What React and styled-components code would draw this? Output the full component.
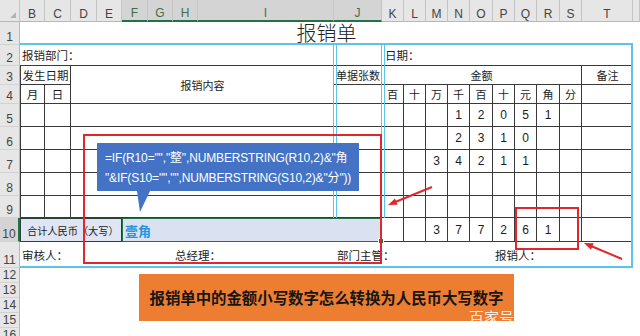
import React from 'react';
import styled, { createGlobalStyle } from 'styled-components';

const INK = '#3a3a3a';
const CYAN = '#5cc3ec';
const RED = '#e3262b';
const GREEN = '#217346';
const CJK = '"Noto Sans CJK SC", sans-serif';
const LAT = '"Liberation Sans", "Noto Sans CJK SC", sans-serif';

const COLS = [20, 25, 26, 26, 25, 26, 25, 25, 136, 48, 22, 22, 22, 22, 23, 22, 22, 23, 22, 51];
const ROWS = [22, 23, 21, 19, 19, 23, 23, 23, 23, 22, 24, 26, 15, 15, 15, 15, 15];
const LETTERS = ['B', 'C', 'D', 'E', 'F', 'G', 'H', 'I', 'J', 'K', 'L', 'M', 'N', 'O', 'P', 'Q', 'R', 'S', 'T', ''];
const UNITS = ['百', '十', '万', '千', '百', '十', '元', '角', '分'];

const Global = createGlobalStyle`
  html, body { margin: 0; padding: 0; background: #fff; overflow: hidden; }
`;

const Page = styled.div`
  position: relative;
  width: 640px;
  height: 336px;
  overflow: hidden;
  background: #fff;
`;

const Sheet = styled.div`
  display: grid;
  grid-template-columns: ${COLS.map((c) => c + 'px').join(' ')} 1fr;
  grid-template-rows: ${ROWS.map((r) => r + 'px').join(' ')};
`;

const Corner = styled.div`
  grid-row: 1;
  grid-column: 1;
  background: #e6e6e6;
  border-right: 1px solid #c4c4c4;
  border-bottom: 1px solid #b8b8b8;
  display: flex;
  align-items: flex-end;
  justify-content: flex-end;
  padding: 0 3px 3px 0;
`;

const ColHead = styled.div`
  grid-row: 1;
  grid-column: ${(p) => p.$c};
  display: flex;
  align-items: flex-end;
  justify-content: center;
  background: ${(p) => (p.$on ? '#d4d4d4' : '#e6e6e6')};
  color: ${(p) => (p.$on ? '#3f6e50' : '#444')};
  border-right: 1px solid #c4c4c4;
  border-bottom: ${(p) => (p.$on ? `2px solid ${GREEN}` : '1px solid #b8b8b8')};
  font: 12px/14px ${LAT};
`;

const RowHead = styled.div`
  grid-column: 1;
  grid-row: ${(p) => p.$r};
  display: flex;
  align-items: flex-end;
  justify-content: center;
  background: ${(p) => (p.$on ? '#d4d4d4' : '#e6e6e6')};
  color: #444;
  border-right: ${(p) => (p.$on ? `2px solid ${GREEN}` : '1px solid #b8b8b8')};
  border-bottom: 1px solid #d2d2d2;
  font: 12px/14px ${LAT};
`;

const edge = (p, s) => (p.$b && p.$b.includes(s) ? `1px solid ${INK}` : 'none');

const Cell = styled.div`
  grid-column: ${(p) => p.$c} / span ${(p) => p.$cs || 1};
  grid-row: ${(p) => p.$r} / span ${(p) => p.$rs || 1};
  display: flex;
  align-items: center;
  justify-content: ${(p) => p.$align || 'center'};
  padding-left: ${(p) => p.$pl || 0}px;
  border-top: ${(p) => edge(p, 't')};
  border-right: ${(p) => edge(p, 'r')};
  border-bottom: ${(p) => edge(p, 'b')};
  border-left: ${(p) => edge(p, 'l')};
  font-family: ${LAT};
  font-size: ${(p) => p.$fs || 12}px;
  color: #1c1c1c;
  white-space: nowrap;
  min-width: 0;
`;

const Title = styled.div`
  grid-column: 2 / span 19;
  grid-row: 2;
  display: flex;
  align-items: flex-end;
  justify-content: center;
  border-bottom: 2px solid ${CYAN};
  font-family: ${CJK};
  font-weight: 300;
  font-size: 20px;
  line-height: 21px;
  color: #222;
`;

const TotalLabel = styled.div`
  grid-column: 2 / span 4;
  grid-row: 11;
  display: flex;
  align-items: center;
  padding-left: 6px;
  background: #dfe5f2;
  border: 1px solid #2e3f36;
  font: 10.2px ${CJK};
  color: #1c1c1c;
  white-space: nowrap;
  overflow: hidden;
`;

const Selected = styled.div`
  grid-column: 6 / span 5;
  grid-row: 11;
  position: relative;
  display: flex;
  align-items: center;
  padding-left: 2px;
  background: #dae2f2;
  border: 1.5px solid ${GREEN};
  font: bold 13px ${CJK};
  color: #1f97de;
  &::after {
    content: '';
    position: absolute;
    right: -3px;
    bottom: -3px;
    width: 4px;
    height: 4px;
    background: ${GREEN};
    border: 1px solid #fff;
  }
`;

const CyanFrame = styled.div`
  grid-column: 2 / span 19;
  grid-row: 3 / span 10;
  border-right: 2px solid ${CYAN};
  border-bottom: 2px solid ${CYAN};
  pointer-events: none;
`;

const JFrame = styled.div`
  grid-column: 10;
  grid-row: 3 / span 8;
  margin: 0 -3px 0 -1.5px;
  border-left: 4px double ${CYAN};
  border-right: 4px double ${CYAN};
  pointer-events: none;
`;

const RedBox = styled.div`
  position: absolute;
  left: ${(p) => p.$x}px;
  top: ${(p) => p.$y}px;
  width: ${(p) => p.$w}px;
  height: ${(p) => p.$h}px;
  box-sizing: border-box;
  border: 2px solid ${RED};
  pointer-events: none;
`;

const Callout = styled.div`
  position: absolute;
  left: 97px;
  top: 143px;
  width: 262px;
  height: 48px;
  box-sizing: border-box;
  padding: 5px 0 0 8px;
  background: #4472c4;
  color: #fff;
  font-family: ${LAT};
  font-size: 12px;
  line-height: 20px;
  letter-spacing: -0.15px;
  &::after {
    content: '';
    position: absolute;
    left: 40px;
    top: 48px;
    width: 13px;
    height: 21px;
    background: #4472c4;
    clip-path: polygon(0 0, 100% 0, 23% 100%);
  }
`;

const FormulaLine = styled.div`
  white-space: pre;
`;

const Banner = styled.div`
  position: absolute;
  left: 139px;
  top: 274px;
  width: 375px;
  height: 47px;
  background: #ed7d31;
  display: flex;
  align-items: center;
  justify-content: center;
  padding-bottom: 1px;
  box-sizing: border-box;
  font: bold 15.4px ${CJK};
  color: #161616;
`;

const Watermark = styled.span`
  position: absolute;
  right: 0;
  bottom: -5px;
  font: 15px/18px ${CJK};
  color: rgba(255, 255, 255, 0.88);
`;

const ArrowLayer = styled.svg`
  position: absolute;
  left: 0;
  top: 0;
  pointer-events: none;
`;

const VALUES = {
  6: { 14: 1, 15: 2, 16: 0, 17: 5, 18: 1 },
  7: { 14: 2, 15: 3, 16: 1, 17: 0 },
  8: { 13: 3, 14: 4, 15: 2, 16: 1, 17: 1 },
  9: {},
  10: {},
  11: { 13: 3, 14: 7, 15: 7, 16: 2, 17: 6, 18: 1 },
};

function MoneyCells({ r, vals }) {
  return UNITS.map((_, i) => {
    const c = 11 + i;
    const v = vals[c];
    return (
      <Cell key={c} $c={c} $r={r} $b="rb">
        {v !== undefined ? v : ''}
      </Cell>
    );
  });
}

export default function App() {
  return (
    <Page>
      <Global />
      <Sheet>
        <Corner>
          <svg width="6" height="6" viewBox="0 0 6 6">
            <polygon points="6,0 6,6 0,6" fill="#b4b4b4" />
          </svg>
        </Corner>
        {LETTERS.map((l, i) => (
          <ColHead key={i} $c={i + 2} $on={i >= 4 && i <= 8}>
            {l}
          </ColHead>
        ))}
        {ROWS.slice(1).map((_, i) => (
          <RowHead key={i} $r={i + 2} $on={i + 1 === 10}>
            {i + 1}
          </RowHead>
        ))}

        <Title>报销单</Title>

        {/* row 2 */}
        <Cell $c={2} $cs={8} $r={3} $b="b" $align="flex-start" $pl={2} $fs={11.5}>
          报销部门：
        </Cell>
        <Cell $c={10} $r={3} $b="b" />
        <Cell $c={11} $cs={10} $r={3} $b="b" $align="flex-start" $pl={3} $fs={11.5}>
          日期：
        </Cell>

        {/* row 3 */}
        <Cell $c={2} $cs={2} $r={4} $b="lrb" $fs={11.5}>
          发生日期
        </Cell>
        <Cell $c={4} $cs={6} $r={4} $rs={2} $b="b" $fs={11}>
          报销内容
        </Cell>
        <Cell $c={10} $r={4} $b="b" $fs={11}>
          单据张数
        </Cell>
        <Cell $c={11} $cs={9} $r={4} $b="rb" $fs={11}>
          金额
        </Cell>
        <Cell $c={20} $r={4} $b="b" $fs={11}>
          备注
        </Cell>

        {/* row 4 */}
        <Cell $c={2} $r={5} $b="lrb" $fs={11.5}>
          月
        </Cell>
        <Cell $c={3} $r={5} $b="rb" $fs={11.5}>
          日
        </Cell>
        <Cell $c={10} $r={5} $b="b" />
        {UNITS.map((u, i) => (
          <Cell key={i} $c={11 + i} $r={5} $b="rb" $fs={11}>
            {u}
          </Cell>
        ))}
        <Cell $c={20} $r={5} $b="b" />

        {/* rows 5-9 */}
        {[6, 7, 8, 9, 10].map((r) => (
          <React.Fragment key={r}>
            <Cell $c={2} $r={r} $b="lrb" />
            <Cell $c={3} $r={r} $b="rb" />
            <Cell $c={4} $cs={6} $r={r} $b="b" />
            <Cell $c={10} $r={r} $b="b" />
            <MoneyCells r={r} vals={VALUES[r]} />
            <Cell $c={20} $r={r} $b="b" />
          </React.Fragment>
        ))}

        {/* row 10 */}
        <TotalLabel>合计人民币（大写）</TotalLabel>
        <Selected>壹角</Selected>
        <MoneyCells r={11} vals={VALUES[11]} />
        <Cell $c={20} $r={11} $b="b" />

        {/* row 11 */}
        <Cell $c={2} $cs={5} $r={12} $align="flex-start" $pl={2} $fs={11.5}>
          审核人：
        </Cell>
        <Cell $c={8} $cs={2} $r={12} $align="flex-start" $pl={2} $fs={11.5}>
          总经理：
        </Cell>
        <Cell $c={10} $cs={4} $r={12} $align="flex-start" $pl={3} $fs={11.5}>
          部门主管：
        </Cell>
        <Cell $c={16} $cs={4} $r={12} $align="flex-start" $pl={2} $fs={11.5}>
          报销人：
        </Cell>

        <CyanFrame />
        <JFrame />
      </Sheet>

      <RedBox $x={83} $y={134} $w={299} $h={130} />
      <RedBox $x={515} $y={207} $w={64} $h={43} />

      <Callout>
        <FormulaLine>{'=IF(R10="","整",NUMBERSTRING(R10,2)&"角'}</FormulaLine>
        <FormulaLine>{'"&IF(S10="","",NUMBERSTRING(S10,2)&"分"))'}</FormulaLine>
      </Callout>

      <ArrowLayer width="640" height="336" viewBox="0 0 640 336">
        <line x1="432" y1="187" x2="394" y2="202.5" stroke={RED} strokeWidth="2" />
        <polygon points="388,205 397.6,204.8 395,198.4" fill={RED} />
        <line x1="622" y1="259" x2="591" y2="246" stroke={RED} strokeWidth="2" />
        <polygon points="584,243 593.7,243.3 590.9,249.7" fill={RED} />
      </ArrowLayer>

      <Banner>
        报销单中的金额小写数字怎么转换为人民币大写数字
        <Watermark>百家号</Watermark>
      </Banner>
    </Page>
  );
}
